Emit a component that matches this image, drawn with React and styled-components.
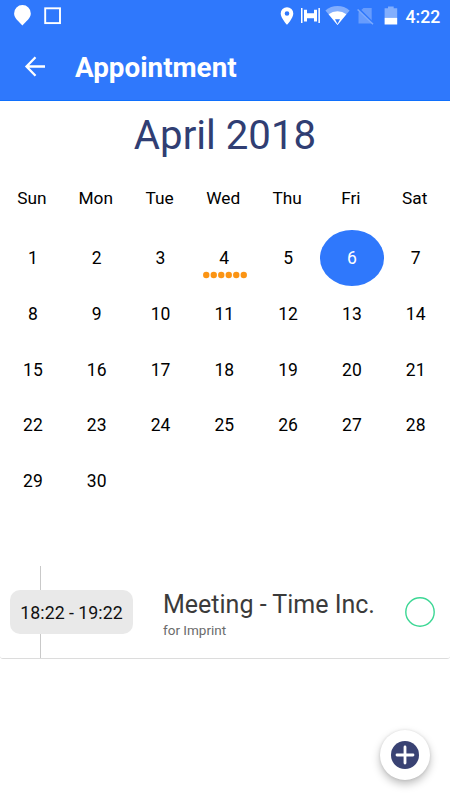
import React, { useState } from 'react'
import styled, { createGlobalStyle } from 'styled-components'

const weekDays = ['Sun', 'Mon', 'Tue', 'Wed', 'Thu', 'Fri', 'Sat']
const days = Array.from({ length: 30 }, (_, i) => i + 1)
const meetings = { 4: 6 }

function StatusBar() {
  return (
    <Status>
      <StatusGroup>
        <svg width="64" height="34" viewBox="0 0 64 34" fill="#fff">
          <path d="M22.4 5a8.3 8.3 0 0 0-8.3 8.4c0 4.9 4.6 7.4 8.3 12.2 3.7-4.8 8.4-7.3 8.4-12.2A8.3 8.3 0 0 0 22.4 5Z" />
          <rect x="45.2" y="8.3" width="14.8" height="14.8" fill="none" stroke="#fff" strokeWidth="1.9" />
        </svg>
      </StatusGroup>
      <StatusGroup>
        <svg width="125" height="34" viewBox="275 0 125 34" fill="#fff">
          <path fillRule="evenodd" d="M287 7.2a6.3 6.3 0 0 0-6.3 6.3c0 4.6 6.3 11.3 6.3 11.3s6.3-6.7 6.3-11.3a6.3 6.3 0 0 0-6.3-6.3Zm0 4a2.3 2.3 0 1 1 0 4.6 2.3 2.3 0 0 1 0-4.6Z" />
          <path d="M301 8h1.5v15H301zM304 9.8h3v11.7h-3zM314 9.8h3v11.7h-3zM318.4 8h1.5v15h-1.5zM307 13.2h7v5h-7z" />
          <path d="M337.5 25 325.4 10.4a19 19 0 0 1 24.2 0Z" opacity=".4" />
          <path d="M337.5 25 328.6 14.2a14.5 14.5 0 0 1 17.8 0Z" />
          <path d="M335 19.3h5l-2.5 4.6Z" fill="#2f78fc" />
          <path d="M363.5 8 358.5 12.5v11h13.200V8Z" opacity=".27" />
          <path d="m358 8 15 15" stroke="#2f78fc" strokeWidth="2" />
          <path d="m357.6 9.5 15.4 14.7" stroke="#7caafd" strokeWidth="1.5" />
          <path d="M388 6.5h5.7v1.7h3.5V18h-12.6V8.2h3.4Z" opacity=".4" />
          <path d="M384.6 17.9h12.6v6.6h-12.6z" />
        </svg>
        <Clock>4:22</Clock>
      </StatusGroup>
    </Status>
  )
}

function Day({ day, selected, onSelect }) {
  return (
    <DayCell $selected={selected} onClick={() => onSelect(day)}>
      {day}
      {meetings[day] && (
        <Dots width="46" height="8" viewBox="0 0 46 8">
          {Array.from({ length: meetings[day] }, (_, i) => (
            <circle key={i} cx={4.25 + i * 7.5} cy="4" r="3.2" />
          ))}
        </Dots>
      )}
    </DayCell>
  )
}

function App() {
  const [selected, setSelected] = useState(6)

  return (
    <Screen>
      <GlobalStyle />
      <Header>
        <StatusBar />
        <Toolbar>
          <BackButton aria-label="Back">
            <svg width="22" height="22" viewBox="0 0 22 22" fill="none" stroke="#fff" strokeWidth="2.3">
              <path d="M21 10.5H3M11.5 1.2 2.500 10.500l9 9.300" />
            </svg>
          </BackButton>
          <Title>Appointment</Title>
        </Toolbar>
      </Header>
      <Month>April 2018</Month>
      <WeekRow>
        {weekDays.map((name) => <WeekDay key={name}>{name}</WeekDay>)}
      </WeekRow>
      <DayGrid>
        {days.map((day) => (
          <Day key={day} day={day} selected={day === selected} onSelect={setSelected} />
        ))}
      </DayGrid>
      <EventCard>
        <Timeline>
          <Rail />
          <TimeBadge>18:22 - 19:22</TimeBadge>
          <Rail $end />
        </Timeline>
        <EventInfo>
          <EventTitle>Meeting - Time Inc.</EventTitle>
          <EventNote>for Imprint</EventNote>
        </EventInfo>
        <StatusRing width="30" height="30" viewBox="0 0 30 30">
          <circle cx="15" cy="15" r="14.2" />
        </StatusRing>
      </EventCard>
      <AddButton aria-label="Add appointment">
        <svg width="30" height="30" viewBox="0 0 30 30">
          <circle cx="15" cy="15" r="14" fill="#394273" />
          <path d="M15 7v16M7 15h16" stroke="#fff" strokeWidth="2.8" strokeLinecap="round" />
        </svg>
      </AddButton>
    </Screen>
  )
}

export default App

const GlobalStyle = createGlobalStyle`
  * {
    box-sizing: border-box;
  }
  body {
    margin: 0;
    background: #fff;
    font-family: Roboto, sans-serif;
  }
  button {
    border: 0;
    padding: 0;
    background: none;
    font: inherit;
    color: inherit;
  }
  svg {
    display: block;
  }
`;

const Screen = styled.div`
  position: relative;
  width: 450px;
  height: 800px;
  overflow: hidden;
  display: flex;
  flex-direction: column;
`;

const Header = styled.header`
  height: 101px;
  flex: none;
  color: white;
  background: #2f78fc;
  border-bottom: 1px solid #1070fd;
`;

const Status = styled.div`
  height: 34px;
  display: flex;
  justify-content: space-between;
`;

const StatusGroup = styled.div`
  display: flex;
  align-items: center;
`;

const Clock = styled.span`
  width: 50px;
  padding-left: 5.5px;
  font-size: 17.6px;
  font-weight: 500;
  line-height: 34px;
`;

const Toolbar = styled.div`
  height: 66px;
  display: flex;
  align-items: center;
`;

const BackButton = styled.button`
  width: 75px;
  padding-left: 24px;
`;

const Title = styled.h1`
  margin: 0;
  padding-top: 2px;
  font-size: 27.8px;
  font-weight: 700;
  line-height: 64px;
`;

const Month = styled.h2`
  margin: 8px 0 0;
  height: 53px;
  color: #303e73;
  font-size: 40.2px;
  font-weight: 400;
  line-height: 54px;
  text-align: center;
`;

const WeekRow = styled.div`
  width: 446.6px;
  height: 68px;
  padding-top: 25px;
  display: grid;
  grid-template-columns: repeat(7, 1fr);
`;

const WeekDay = styled.div`
  font-size: 17.3px;
  line-height: 22px;
  text-align: center;
`;

const DayGrid = styled.div`
  width: 446.6px;
  height: 336px;
  margin-left: 1px;
  display: grid;
  grid-template-columns: repeat(7, 1fr);
  grid-auto-rows: 55.65px;
  align-content: start;
`;

const DayCell = styled.button`
  position: relative;
  display: grid;
  place-items: center;
  padding-top: 1px;
  border-radius: 50%;
  font-size: 17.5px;
  color: ${(props) => (props.$selected ? 'white' : 'black')};
  background: ${(props) => (props.$selected ? '#2f78fc' : 'transparent')};
`;

const Dots = styled.svg`
  position: absolute;
  bottom: 7px;
  left: 9.6px;
  fill: #fb9414;
`;

const EventCard = styled.section`
  height: 93px;
  display: flex;
  border-bottom: 1px solid #dcdcdc;
  border-radius: 3px;
`;

const Timeline = styled.div`
  width: 123px;
  margin-left: 10px;
  display: flex;
  flex-direction: column;
`;

const Rail = styled.div`
  width: 1px;
  height: ${(props) => (props.$end ? '25px' : '24px')};
  margin-left: 30px;
  background: #c9c9c9;
`;

const TimeBadge = styled.div`
  height: 44px;
  border-radius: 10px;
  background: #e9e9e9;
  color: #111;
  font-size: 17.8px;
  line-height: 46px;
  text-align: center;
`;

const EventInfo = styled.div`
  flex: 1;
  padding: 23px 0 0 30px;
`;

const EventTitle = styled.div`
  color: #3b3b3b;
  font-size: 25px;
  line-height: 32px;
  white-space: nowrap;
`;

const EventNote = styled.div`
  color: #6b6b6b;
  font-size: 13.5px;
  line-height: 18px;
`;

const StatusRing = styled.svg`
  margin: 31px 15px 0 0;
  fill: none;
  stroke: #3bd794;
  stroke-width: 1.4px;
`;

const AddButton = styled.button`
  position: absolute;
  right: 20px;
  bottom: 20px;
  width: 50px;
  height: 50px;
  display: grid;
  place-items: center;
  border-radius: 50%;
  background: white;
  box-shadow: 0 4px 8px rgba(0, 0, 0, 0.26), 0 0 3px rgba(0, 0, 0, 0.1);
`;
